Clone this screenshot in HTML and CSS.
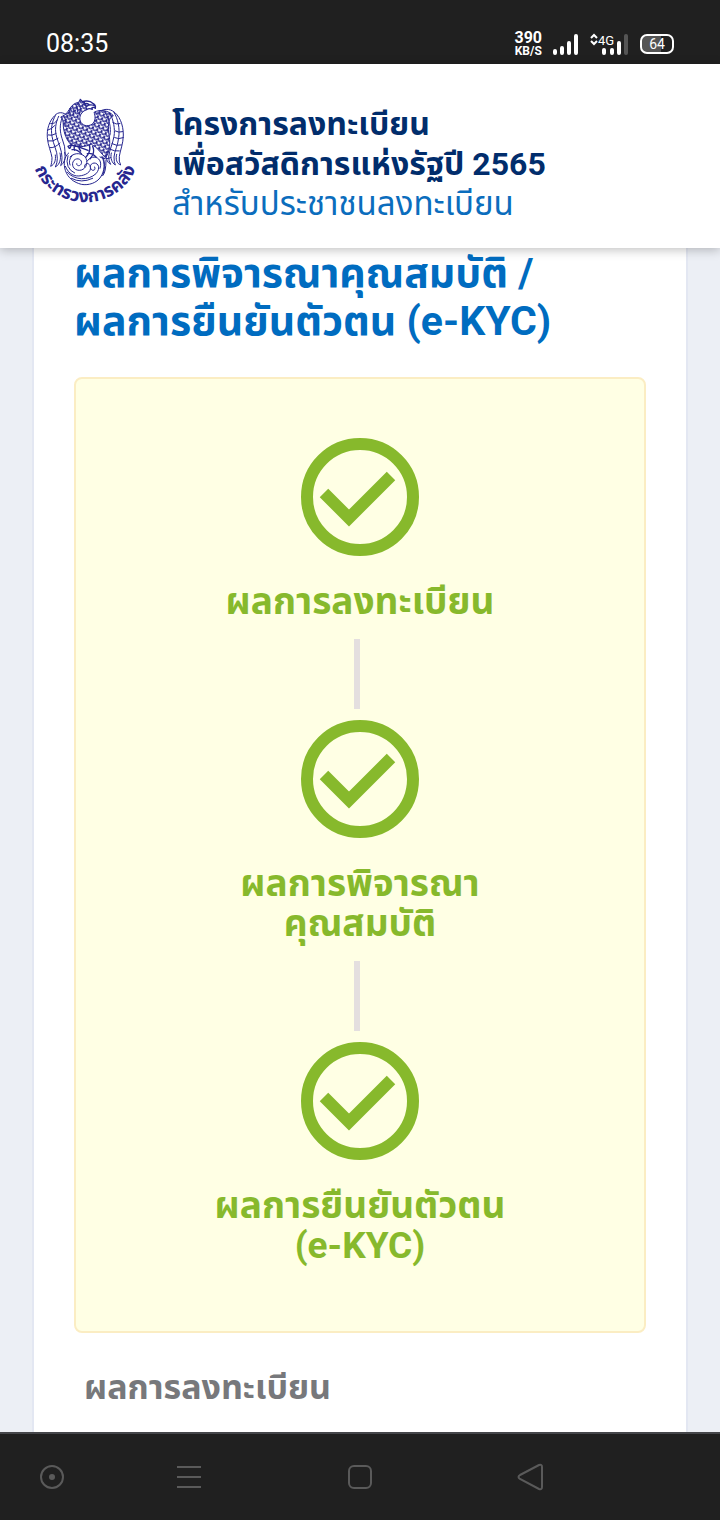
FILE: index.html
```
<!DOCTYPE html>
<html lang="th">
    <head>
        <meta charset="utf-8">
        <meta name="viewport" content="width=device-width">
        <title>โครงการลงทะเบียนเพื่อสวัสดิการแห่งรัฐปี 2565</title>
        <link rel="stylesheet" href="styles.css">
    </head>
    <body>
        <div class="status">
            <div class="time">08:35</div>
            <div class="status-right">
                <div class="speed"><b>390</b><span>KB/S</span></div>
                <svg class="signal" width="28" height="24" viewBox="0 0 28 24">
                    <path d="M3 19V21M10 16V21M17 11V21M24 4V21" stroke="#fff" stroke-width="4" stroke-linecap="round"/>
                </svg>
                <svg class="signal-4g" width="40" height="24" viewBox="0 0 40 24">
                    <path d="M1 6L4 3L7 6M1 9L4 12L7 9" fill="none" stroke="#fff" stroke-width="2"/>
                    <text x="8" y="13" class="net">4G</text>
                    <path d="M14 18V21M22 18V21M29 11V21" stroke="#fff" stroke-width="4" stroke-linecap="round"/>
                    <path d="M36 4V21" stroke="#555" stroke-width="4" stroke-linecap="round"/>
                </svg>
                <div class="battery">64</div>
            </div>
        </div>

        <header class="header">
            <svg class="logo" viewBox="36 36 330 330">
                <defs>
                    <pattern id="scales" width="14" height="12" patternUnits="userSpaceOnUse" patternTransform="rotate(24)">
                        <path d="M0 0Q1 9 7 10Q13 9 14 0M-7 6Q-6 11 0 12M14 12Q20 11 21 6" fill="none" stroke="#26268f" stroke-width="4"/>
                    </pattern>
                    <path id="arc" d="M31 187A165 165 0 0 0 361 187"/>
                </defs>
                <g fill="none" stroke="#26268f" stroke-width="3" stroke-linejoin="round" stroke-linecap="round">
                    <!-- body -->
                    <path fill="url(#scales)" d="M150 70C156 60 164 54 176 52L181 43L187 50C194 50 198 56 198 64L200 74C184 80 176 94 181 108C186 122 202 126 216 118C228 108 226 92 222 82C240 72 266 76 280 92C266 98 264 116 266 142C272 170 270 204 256 218C244 206 232 186 214 178C194 186 172 188 154 180C140 166 132 146 130 124C130 104 126 100 122 96C134 92 142 84 150 70Z"/>
                    <!-- head -->
                    <path d="M181 43L187 50Q208 44 220 56Q228 60 226 70Q222 66 216 68L217 73Q208 68 199 74M190 57Q200 53 208 59L200 64ZM208 60Q218 58 226 64" stroke-width="4"/>
                    <path d="M166 58Q176 66 172 82M176 54Q186 70 178 88M156 66Q164 74 160 88M148 76Q154 84 150 96"/>
                    <!-- left wing -->
                    <path d="M142 92C130 80 114 80 104 92C88 108 80 132 82 158C84 182 94 202 96 218C96 230 94 238 92 244C104 238 108 226 106 210M106 92C96 110 92 130 96 154C100 180 112 196 112 220Q112 234 106 246C120 238 124 222 120 204M116 94C106 114 104 136 110 156C116 178 126 196 126 218Q126 232 122 242C132 234 138 222 134 202M126 100C118 120 120 142 126 160Q136 182 136 210M84 150Q94 154 108 146M82 136Q96 132 104 122M84 168Q98 172 114 160M90 188Q104 190 120 174M92 116Q104 118 112 106M130 90Q140 104 138 122"/>
                    <!-- right wing -->
                    <path d="M228 88C240 74 262 68 278 78C298 90 310 118 310 150C310 176 300 198 298 214Q296 230 302 240C290 236 286 222 290 208M282 82C294 102 300 130 296 158C294 180 284 196 282 216Q282 232 286 240C276 234 270 220 274 204M270 84C280 104 286 132 282 154C278 178 268 194 266 216Q266 228 272 238C260 232 256 216 260 200M256 84C268 104 274 128 270 150M308 140Q296 144 286 138M310 158Q296 164 284 158M304 180Q290 184 276 176M298 198Q284 200 268 192M300 116Q288 120 278 112"/>
                    <!-- feet -->
                    <path d="M156 176L150 190M166 180Q160 188 164 196M178 182Q174 190 182 198M148 190L144 184L152 180Q170 182 188 190L204 196M208 180Q212 192 206 206L198 216M218 184Q224 196 218 210L210 222M202 206Q216 202 228 216M156 194Q172 192 184 206" stroke-width="4"/>
                    <!-- swirls -->
                    <path d="M146 204C132 214 130 238 136 256C144 280 162 292 184 298C206 302 230 294 242 276C254 256 256 238 246 214M150 216C164 200 190 204 198 220C206 238 194 256 178 256C160 256 152 238 162 226C172 216 188 224 184 236C180 246 168 242 170 236M136 244C146 268 164 276 184 272C204 268 216 256 210 242C204 230 192 236 194 246M142 262C164 286 204 288 228 266C242 250 236 234 222 234C208 236 208 252 218 256Q228 256 224 246M154 280Q184 296 218 280M202 228C208 216 226 212 236 222Q246 232 240 250M144 212Q138 230 144 244Q150 258 164 264M156 212Q144 226 150 240M250 218Q258 244 248 272Q258 262 258 226M240 216Q256 226 272 218"/>
                </g>
                <text class="seal-text" text-anchor="middle"><textPath href="#arc" startOffset="50%">กระทรวงการคลัง</textPath></text>
            </svg>
            <div class="header-text">
                <div class="project">โครงการลงทะเบียน<br>เพื่อสวัสดิการแห่งรัฐปี 2565</div>
                <div class="sub">สำหรับประชาชนลงทะเบียน</div>
            </div>
        </header>

        <main class="page">
            <div class="panel">
                <h1>ผลการพิจารณาคุณสมบัติ /<br>ผลการยืนยันตัวตน (e-KYC)</h1>
                <div class="steps">
                    <div class="step">
                        <svg class="check" viewBox="0 0 120 120">
                            <circle cx="60" cy="60" r="53"/>
                            <path d="M24 56L49 81L91 39"/>
                        </svg>
                        <div class="label">ผลการลงทะเบียน</div>
                    </div>
                    <div class="line"></div>
                    <div class="step">
                        <svg class="check" viewBox="0 0 120 120">
                            <circle cx="60" cy="60" r="53"/>
                            <path d="M24 56L49 81L91 39"/>
                        </svg>
                        <div class="label">ผลการพิจารณา<br>คุณสมบัติ</div>
                    </div>
                    <div class="line"></div>
                    <div class="step">
                        <svg class="check" viewBox="0 0 120 120">
                            <circle cx="60" cy="60" r="53"/>
                            <path d="M24 56L49 81L91 39"/>
                        </svg>
                        <div class="label">ผลการยืนยันตัวตน<br>(e-KYC)</div>
                    </div>
                </div>
                <h2>ผลการลงทะเบียน</h2>
            </div>
        </main>

        <nav class="navbar">
            <button aria-label="Assistant">
                <svg width="28" height="28" viewBox="0 0 28 28"><circle cx="14" cy="14" r="11"/><circle class="dot" cx="14" cy="14" r="3"/></svg>
            </button>
            <button aria-label="Menu">
                <svg width="28" height="28" viewBox="0 0 28 28"><path d="M2 4H26M2 14H26M2 24H26"/></svg>
            </button>
            <button aria-label="Home">
                <svg width="28" height="28" viewBox="0 0 28 28"><rect x="3" y="3" width="22" height="22" rx="5"/></svg>
            </button>
            <button aria-label="Back">
                <svg width="28" height="28" viewBox="0 0 28 28"><path d="M3 12L22 2Q25 1 25 4V24Q25 27 22 26L3 16Q0 14 3 12Z"/></svg>
            </button>
        </nav>
    </body>
</html>
```
FILE: styles.css
```
* {
    box-sizing: border-box;
}

body {
    margin: 0;
    height: 100vh;
    display: flex;
    flex-direction: column;
    font-family: Roboto, "Noto Sans Thai", "Noto Sans", sans-serif;
    background-color: #eceff5;
}

/* phone status bar */
.status {
    flex: none;
    height: 64px;
    padding: 24px 46px 0;
    display: flex;
    justify-content: space-between;
    background-color: #202020;
    color: #fff;
}

.time {
    font-size: 25px;
    line-height: 40px;
}

.status-right {
    display: flex;
    align-items: center;
    gap: 10px;
    height: 40px;
}

.speed {
    display: flex;
    flex-direction: column;
    align-items: center;
    font-size: 16px;
    line-height: 14px;
}

.speed span {
    font-size: 12px;
    line-height: 12px;
    font-weight: bold;
}

.net {
    font-size: 13px;
    fill: #fff;
}

.battery {
    width: 34px;
    height: 20px;
    border: 2px solid #fff;
    border-radius: 7px;
    background: linear-gradient(to right, #555 64%, #202020 64%);
    font-size: 14px;
    line-height: 16px;
    text-align: center;
}

/* site header */
.header {
    flex: none;
    height: 184px;
    padding: 33px 32px 0;
    display: flex;
    align-items: flex-start;
    gap: 30px;
    background-color: #fff;
    box-shadow: 0 2px 10px rgba(0, 0, 0, 0.25);
    z-index: 1;
}

.logo {
    flex: none;
    width: 110px;
    height: 110px;
    overflow: visible;
}

.seal-text {
    font-size: 54px;
    font-weight: bold;
    fill: #26268f;
}

.header-text {
    padding-top: 7px;
    font-size: 32px;
    line-height: 40px;
    white-space: nowrap;
}

.project {
    font-weight: bold;
    color: #012d6c;
}

.sub {
    font-size: 33px;
    color: #0b6dbd;
}

/* content */
.page {
    flex: 1;
    min-height: 0;
    overflow: hidden;
    padding: 0 32px;
}

.panel {
    padding: 1px 40px 40px;
    border: 2px solid #e3e7f2;
    border-width: 0 2px;
    background-color: #fff;
}

h1 {
    margin: 0 0 32px;
    font-size: 41px;
    line-height: 48px;
    color: #006cc0;
    white-space: nowrap;
}

.steps {
    padding: 58px 20px 65px;
    border: 2px solid #fbedc3;
    border-radius: 8px;
    background-color: #ffffe4;
}

.step {
    display: flex;
    flex-direction: column;
    align-items: center;
    gap: 25px;
}

.check {
    width: 120px;
    height: 120px;
    fill: none;
    stroke: #87b92c;
    stroke-width: 12px;
}

.label {
    font-size: 37px;
    line-height: 40px;
    font-weight: bold;
    text-align: center;
    color: #87b92c;
}

.line {
    width: 50%;
    height: 70px;
    margin: 17px 0 10px;
    border-right: 6px solid #e4dfdf;
}

h2 {
    margin: 34px 10px 0;
    font-size: 34px;
    line-height: 40px;
    color: #77787b;
}

/* phone navigation */
.navbar {
    flex: none;
    height: 88px;
    display: grid;
    grid-template-columns: 104px 1fr 1fr 1fr 104px;
    border-top: 2px solid #45464a;
    background-color: #202020;
}

.navbar button {
    display: flex;
    align-items: center;
    justify-content: center;
    padding: 0;
    border: 0;
    background: none;
}

.navbar svg {
    fill: none;
    stroke: #5a5a5a;
    stroke-width: 2px;
}

.navbar .dot {
    fill: #5a5a5a;
    stroke: none;
}
```
